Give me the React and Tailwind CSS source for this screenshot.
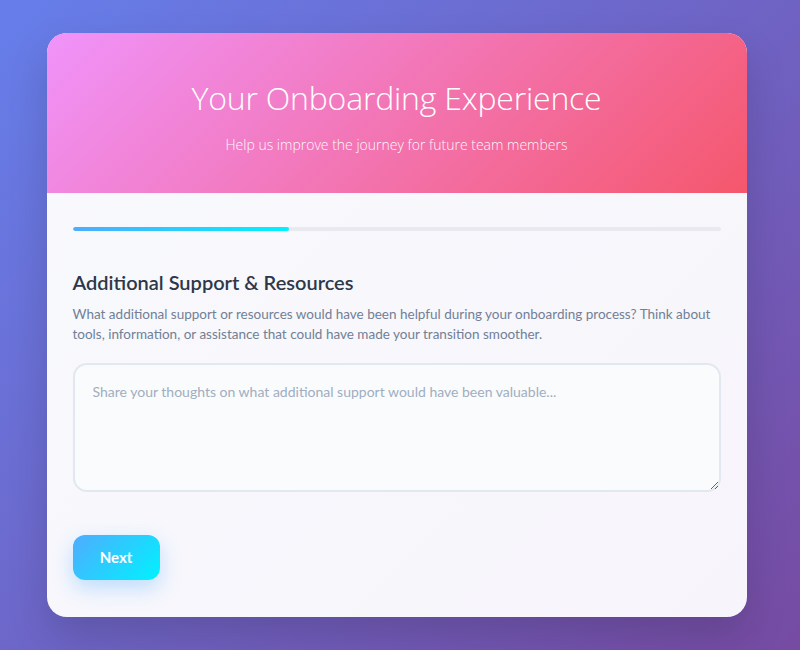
export default function App() {
  return (
    <div className="min-h-screen w-full flex items-center justify-center pr-[7px] bg-[linear-gradient(135deg,#667eea_0%,#764ba2_100%)]" style={{ fontFamily: 'Lato, "Open Sans", sans-serif' }}>
      <div className="w-[700px] rounded-[20px] overflow-hidden bg-[linear-gradient(135deg,#f8f9fd_0%,#f7f5fb_100%)] shadow-[0_20px_40px_rgba(0,0,0,0.15)]">
        <div className="h-[160px] flex flex-col items-center pt-[43px] bg-[linear-gradient(135deg,#f093fb_0%,#f5576c_100%)] text-white">
          <h1 className="text-[32px] font-light leading-[44px] tracking-[-0.2px]" style={{ fontFamily: '"Open Sans", sans-serif' }}>Your Onboarding Experience</h1>
          <p className="text-[14px] font-light opacity-95 mt-[14px]" style={{ fontFamily: '"Open Sans", sans-serif' }}>Help us improve the journey for future team members</p>
        </div>
        <div className="px-[26px] pt-[34px] pb-[37px]">
          <div className="h-[4px] w-full rounded-full bg-[#e9eaf0] overflow-hidden">
            <div className="h-full w-1/3 rounded-full bg-[linear-gradient(90deg,#4facfe_0%,#00f2fe_100%)]"></div>
          </div>
          <h2 className="mt-[38px] text-[20px] font-semibold text-[#2d3748] leading-[26px]">Additional Support &amp; Resources</h2>
          <p className="mt-[9px] text-[13.5px] leading-[20px] text-[#718096]">What additional support or resources would have been helpful during your onboarding process? Think about tools, information, or assistance that could have made your transition smoother.</p>
          <textarea
            className="mt-[19px] block w-full h-[129px] rounded-[14px] border-2 border-[#e2e8f0] bg-[#fafbfc] px-[18px] py-[16px] text-[14px] text-[#2d3748] placeholder:text-[#a0aec0] outline-none"
            placeholder="Share your thoughts on what additional support would have been valuable..."
          ></textarea>
          <button className="mt-[43px] w-[87px] h-[45px] rounded-[12px] bg-[linear-gradient(135deg,#4facfe_0%,#00f2fe_100%)] text-white font-bold text-[15px] shadow-[0_8px_20px_rgba(79,172,254,0.35)]">Next</button>
        </div>
      </div>
    </div>
  );
}
